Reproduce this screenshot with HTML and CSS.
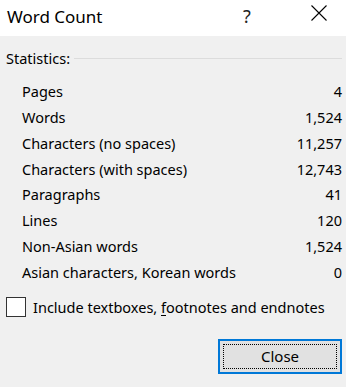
FILE: index.html
```html
<!DOCTYPE html>
<html lang="en">

<head>
  <meta charset="UTF-8">
  <meta name="viewport" content="width=device-width, initial-scale=1.0">
  <title>Word Count</title>
  <link rel="stylesheet" href="styles.css">
</head>

<body>
  <div class="dialog">
    <div class="title-bar">
      <span class="title">Word Count</span>
      <span class="help">?</span>
      <span class="close-x">
        <svg width="16" height="16" viewBox="0 0 16 16">
          <path d="M0.5 0.5 L15.5 15.5 M15.5 0.5 L0.5 15.5" stroke="#000" stroke-width="1.1" fill="none" />
        </svg>
      </span>
    </div>

    <div class="content">
      <div class="group-header">
        <span>Statistics:</span>
        <div class="group-line"></div>
      </div>

      <div class="stats">
        <div class="stat-row"><span>Pages</span><span>4</span></div>
        <div class="stat-row"><span>Words</span><span>1,524</span></div>
        <div class="stat-row"><span>Characters (no spaces)</span><span>11,257</span></div>
        <div class="stat-row"><span>Characters (with spaces)</span><span>12,743</span></div>
        <div class="stat-row"><span>Paragraphs</span><span>41</span></div>
        <div class="stat-row"><span>Lines</span><span>120</span></div>
        <div class="stat-row"><span>Non-Asian words</span><span>1,524</span></div>
        <div class="stat-row"><span>Asian characters, Korean words</span><span>0</span></div>
      </div>

      <label class="check-row">
        <span class="checkbox"></span>
        <span>Include textboxes, <u>f</u>ootnotes and endnotes</span>
      </label>

      <div class="button-group">
        <button class="close-btn"><span class="focus-rect">Close</span></button>
      </div>
    </div>
  </div>
</body>

</html>
```

FILE: styles.css
```css
body {
  margin: 0;
  padding: 0;
  font-family: 'Noto Sans', 'Open Sans', sans-serif;
  color: #000;
  background-color: #f0f0f0;
}

.dialog {
  width: 346px;
  height: 387px;
  display: flex;
  flex-direction: column;
  background-color: #f0f0f0;
}

.title-bar {
  height: 36px;
  background-color: #fff;
  display: flex;
  align-items: center;
  box-sizing: border-box;
  padding-left: 7px;
}

.title {
  flex: 1;
  font-size: 17px;
  margin-top: -4px;
}

.help {
  font-size: 18px;
  width: 20px;
  margin-right: 48px;
  margin-top: -5px;
  color: #222;
}

.close-x {
  width: 16px;
  height: 16px;
  margin-right: 19px;
  margin-top: -10px;
}

.close-x svg {
  display: block;
}

.content {
  flex: 1;
  padding: 0 4px 0 6px;
  font-size: 14.5px;
}

.group-header {
  display: flex;
  align-items: center;
  gap: 4px;
  margin-top: 12px;
  height: 20px;
}

.group-line {
  flex: 1;
  height: 1px;
  background-color: #dcdcdc;
}

.stats {
  margin-top: 11px;
  padding-left: 16px;
}

.stat-row {
  display: flex;
  justify-content: space-between;
  height: 25.85px;
  line-height: 24px;
}

.check-row {
  display: flex;
  align-items: center;
  gap: 7px;
  margin-top: 11px;
}

.checkbox {
  width: 18px;
  height: 18px;
  border: 1px solid #333;
  background-color: #fff;
}

.check-row u {
  text-underline-offset: 2px;
}

.button-group {
  display: flex;
  justify-content: flex-end;
  margin-top: 22px;
}

.close-btn {
  width: 124px;
  height: 35px;
  padding: 3px;
  border: 2px solid #0078d7;
  background-color: #e1e1e1;
  font-family: 'Noto Sans', 'Open Sans', sans-serif;
  font-size: 15px;
  color: #000;
  box-sizing: border-box;
  display: flex;
}

.focus-rect {
  flex: 1;
  border: 1px dotted #000;
  display: flex;
  align-items: center;
  justify-content: center;
}
```
